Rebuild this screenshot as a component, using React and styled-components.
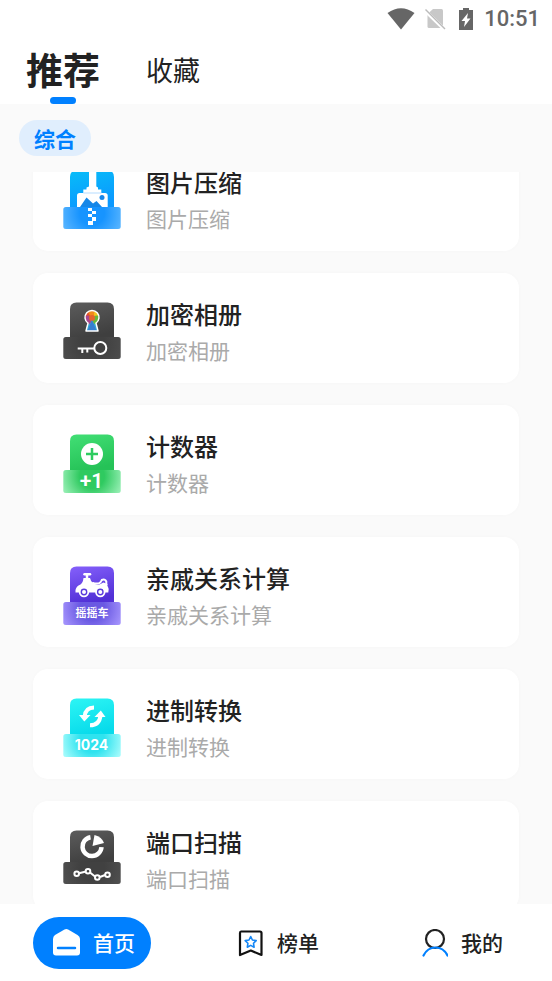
import React, { useLayoutEffect, useRef, useState } from "react";
import styled, { createGlobalStyle } from "styled-components";

const GlobalStyle = createGlobalStyle`
  * {
    box-sizing: border-box;
  }

  body {
    margin: 0;
    background: #fafafa;
    color: #222;
    font-family: "Noto Sans CJK SC", "Noto Sans", sans-serif;
  }

  button {
    border: 0;
    padding: 0;
    background: none;
    color: inherit;
    font: inherit;
    cursor: pointer;
  }
`;

const Page = styled.div`
  display: flex;
  flex-direction: column;
  height: 100vh;
`;

const Header = styled.header`
  background: #fff;
`;

const StatusBar = styled.div`
  display: flex;
  align-items: center;
  justify-content: flex-end;
  height: 37px;
  padding-right: 12px;
  color: #666;
`;

const Clock = styled.time`
  margin-left: 10px;
  font-family: Roboto, sans-serif;
  font-size: 22px;
  font-weight: 500;
`;

const StatusIcon = styled.svg`
  display: block;
  height: 24px;
  margin-right: ${(props) => props.$gap || 0}px;
`;

const Tabs = styled.nav`
  display: flex;
  gap: 46px;
  height: 67px;
  padding-left: 26px;
`;

const Tab = styled.button`
  display: flex;
  flex-direction: column;
  align-items: center;
  justify-content: space-between;
  height: 67px;
  font-size: ${(props) => (props.$active ? 37 : 27)}px;
  font-weight: ${(props) => (props.$active ? 700 : 400)};
  line-height: ${(props) => (props.$active ? 64 : 66)}px;

  &::after {
    content: "";
    width: 26px;
    height: 7px;
    border-radius: 4px;
    background: ${(props) => (props.$active ? "#0080ff" : "transparent")};
  }
`;

const TabLabel = styled.span`
  height: 60px;
`;

const Categories = styled.div`
  display: flex;
  padding: 16px 19px;
`;

const Category = styled.button`
  && {
    height: 36px;
    padding: 0 15px;
    border-radius: 18px;
    background: #e0eefd;
    color: #0080ff;
    font-size: 21px;
    font-weight: 700;
    line-height: 34px;
  }
`;

const ToolList = styled.ul`
  flex: 1;
  min-height: 0;
  margin: 0;
  padding: 0 33px 22px;
  overflow-y: auto;
  list-style: none;
  scrollbar-width: none;
`;

const ToolCard = styled.li`
  display: flex;
  gap: 25px;
  height: 110px;
  margin-bottom: 22px;
  padding: 22px 30px 14px;
  border-radius: 15px;
  background: #fff;
  box-shadow: 0 0 4px rgba(0, 0, 0, 0.02);
`;

const ToolIcon = styled.svg`
  flex: none;
  width: 58px;
  height: 60px;
  margin-top: 7px;
`;

const ToolName = styled.h2`
  margin: 0;
  font-size: 24px;
  font-weight: 500;
  line-height: 37px;
`;

const ToolText = styled.p`
  margin: 0;
  color: #aaa;
  font-size: 21px;
  font-weight: 400;
  line-height: 37px;
`;

const BottomNav = styled.nav`
  display: flex;
  justify-content: space-between;
  padding: 13px 33px 12px;
  background: #fff;
`;

const NavItem = styled.button`
  && {
    display: flex;
    align-items: center;
    gap: 13px;
    width: 118px;
    height: 52px;
    padding-left: 19px;
    border-radius: 26px;
    background: ${(props) => (props.$active ? "#0080ff" : "transparent")};
    color: ${(props) => (props.$active ? "#fff" : "#222")};
    font-size: 21px;
    font-weight: 500;
    white-space: nowrap;
  }
`;

const NavLabel = styled.span`
  padding-bottom: 3px;
`;

const NavIcon = styled.svg`
  flex: none;
  width: 28px;
  height: 28px;
`;

// Every tool icon is a tall block standing behind a wider plate
function BlockIcon({ id, top, plate, split = 36, end = 59, children }) {
  return (
    <ToolIcon viewBox="0 0 58 60" aria-hidden="true">
      <defs>
        <linearGradient id={`${id}-top`} x1="0" y1="0" x2="0.3" y2="1">
          <stop offset="0" stopColor={top[0]} />
          <stop offset="1" stopColor={top[1]} />
        </linearGradient>
        <radialGradient
          id={`${id}-plate`}
          gradientUnits="userSpaceOnUse"
          cx="29"
          cy={split + 6}
          r="31"
        >
          <stop offset="0" stopColor={plate[0]} />
          <stop offset="0.4" stopColor={plate[0]} />
          <stop offset="1" stopColor={plate[1]} />
        </radialGradient>
      </defs>
      <path
        d={`M7 ${split + 2}V7Q7 .5 13.500 .5H44.500Q51 .5 51 7V${split + 2}Z`}
        fill={`url(#${id}-top)`}
      />
      <rect
        x="0.300"
        y={split}
        width="57.400"
        height={end - split}
        rx="2.500"
        fill={`url(#${id}-plate)`}
      />
      {children}
    </ToolIcon>
  );
}

function CompressIcon() {
  return (
    <BlockIcon id="zip" top={["#08bdf8", "#0a98ff"]} plate={["#1794ff", "#55b3ff"]} split={37}>
      <path d="M26 0h7.300v16.500l1.700 1v2h3.300V23H20.300v-3.500h3.200v-2l2.500-1z" fill="#fff" />
      <path d="M14 37V25.500q0-2.500 2.500-2.500h25.500q2.700 0 2.700 2.500V37z" fill="#fff" />
      <path d="M20.300 23h18" stroke="#b5dcff" strokeWidth="1" />
      <path d="M17 37l6.500-9.500 6.500 6 3.500-2.500 5.500 6z" fill="#1687e8" />
      <circle cx="39" cy="27.500" r="2.500" fill="#1687e8" />
      <path
        d="M25 38h4v3h-4zM29 41h4v3h-4zM25 44h4v3h-4zM29 47h4v4h-4zM25 51h5v4h-5z"
        fill="#fff"
      />
    </BlockIcon>
  );
}

function AlbumIcon() {
  return (
    <BlockIcon id="album" top={["#5c5c5c", "#3f3f3f"]} plate={["#414141", "#4c4c4c"]} split={35} end={57}>
      <clipPath id="bulb">
        <path d="M25 21.200a7 7 0 1 1 8 0L35 29H23z" />
      </clipPath>
      <g clipPath="url(#bulb)">
        <rect x="20" y="6" width="18" height="25" fill="#35a9d4" />
        <circle cx="24" cy="11" r="5.500" fill="#e3502b" />
        <circle cx="30" cy="10" r="4.500" fill="#f08a1d" />
        <circle cx="35" cy="12" r="4" fill="#f4c51e" />
        <circle cx="34" cy="18" r="4.500" fill="#67b83b" />
        <circle cx="24" cy="18" r="4.500" fill="#a8478f" />
        <circle cx="29" cy="16" r="3" fill="#e4672e" />
        <path d="M29 18l-5 12h10z" fill="#367ed0" />
      </g>
      <path
        d="M25 21.200a7 7 0 1 1 8 0L35 29H23z"
        fill="none"
        stroke="#fff"
        strokeWidth="1.500"
        strokeLinejoin="round"
      />
      <g fill="none" stroke="#fff" strokeWidth="2">
        <circle cx="37.300" cy="46" r="6" />
        <path d="M31 46.500H14.700M19.300 46.500v4.500M24.300 46.500v4" />
      </g>
    </BlockIcon>
  );
}

function CounterIcon() {
  return (
    <BlockIcon id="count" top={["#42df75", "#25c257"]} plate={["#2fca60", "#92edb0"]}>
      <circle cx="29" cy="20" r="11" fill="#fff" />
      <path d="M29 14v12M23 20h12" stroke="#2dcc60" strokeWidth="2.500" />
      <text
        x="28.500"
        y="54"
        textAnchor="middle"
        fill="#fff"
        fontFamily="Roboto, sans-serif"
        fontSize="21"
        fontWeight="600"
      >
        +1
      </text>
    </BlockIcon>
  );
}

function RelativeIcon() {
  return (
    <BlockIcon id="car" top={["#8560fb", "#5130d6"]} plate={["#6a59e2", "#a291fb"]}>
      <path d="M21.500 8.300h5.500" stroke="#fff" strokeWidth="2.500" strokeLinecap="round" />
      <path d="M24 9v6" stroke="#fff" strokeWidth="2.500" />
      <path
        d="M12.500 26q-.5-4 3-6.500 4.500-1.500 5-7.500h6.500q.8 4 3.500 5.500 3 1.500 6 1l4-2 4 1.500q-.5 2 .5 3 1.500 2 .3 5.500H12.500z"
        fill="#fff"
      />
      <path
        d="M30 17q3 1 6 .2 1.800-.7 2.800-3.200 3-1.500 4.500 1.500v3"
        fill="none"
        stroke="#fff"
        strokeWidth="2"
        strokeLinecap="round"
      />
      <g fill="#5a3bdd" stroke="#fff" strokeWidth="1.800">
        <circle cx="21" cy="26" r="4.300" />
        <circle cx="37.300" cy="26" r="4.300" />
      </g>
      <circle cx="21" cy="26" r="2" fill="#fff" />
      <circle cx="37.300" cy="26" r="2" fill="#fff" />
      <text x="29" y="51" textAnchor="middle" fill="#fff" fontSize="11" fontWeight="700">
        摇摇车
      </text>
    </BlockIcon>
  );
}

function ConvertIcon() {
  return (
    <BlockIcon id="convert" top={["#2df5f4", "#08dbeb"]} plate={["#2fe3ef", "#a0fafb"]}>
      <g fill="none" stroke="#fff" strokeWidth="4">
        <path d="M31 9.500q-8.500 0-9.300 9" />
        <path d="M27 27.300q9.500 0 10.500-9.800" />
      </g>
      <path d="M16 17h11.500L21.300 23.500z" fill="#fff" />
      <path d="M31.500 19L37.800 12.500l4.700 6.500z" fill="#fff" />
      <text
        x="28.500"
        y="52"
        textAnchor="middle"
        fill="#fff"
        fontFamily="Inter, sans-serif"
        fontSize="14"
        fontWeight="700"
      >
        1024
      </text>
    </BlockIcon>
  );
}

function PortIcon() {
  return (
    <BlockIcon id="port" top={["#5c5c5c", "#3f3f3f"]} plate={["#414141", "#4f4f4f"]} split={32} end={54}>
      <path d="M27.500 7.200a9.500 9.500 0 1 0 11 10" fill="none" stroke="#fff" strokeWidth="4.500" />
      <path d="M31.500 5Q39 7 41 13L29.500 16z" fill="#fff" />
      <path d="M16 43.200l7-1.700M27 42.500l5 4M37 47l5-2" stroke="#fff" strokeWidth="2" />
      <g fill="none" stroke="#fff" strokeWidth="2">
        <circle cx="13.700" cy="43.800" r="2.300" />
        <circle cx="25" cy="41.200" r="2.300" />
        <circle cx="34.300" cy="47.500" r="2.300" />
        <circle cx="44.500" cy="44.800" r="2.300" />
      </g>
    </BlockIcon>
  );
}

function HomeIcon() {
  return (
    <NavIcon viewBox="0 0 28 28" aria-hidden="true">
      <path
        d="M3 6L12.500 .5q1.800-1 3.600 0L25.500 6q2.500 1.500 2.500 4v13.500q0 3-3 3H4q-3 0-3-3V10q0-2.500 2-4z"
        fill="#fff"
      />
      <path d="M6 19h17" stroke="#0080ff" strokeWidth="2.500" strokeLinecap="round" />
    </NavIcon>
  );
}

function RankIcon() {
  return (
    <NavIcon viewBox="0 0 28 28" fill="none" strokeLinejoin="round" aria-hidden="true">
      <path d="M5 2.500h19q1.500 0 1.500 1.500v22l-10.700-4.500L4 26V4q0-1.500 1-1.500z" stroke="#111" strokeWidth="2.200" />
      <path
        d="M14.700 7.500l1.700 3.500 3.800.6-2.700 2.700.6 3.900-3.400-1.800-3.400 1.800.6-3.900-2.700-2.700 3.800-.6z"
        stroke="#1687f5"
        strokeWidth="1.600"
      />
    </NavIcon>
  );
}

function UserIcon() {
  return (
    <NavIcon viewBox="0 0 28 28" fill="none" strokeWidth="2.200" aria-hidden="true">
      <circle cx="15" cy="10" r="9" stroke="#222" />
      <path d="M3.500 26.500q4-8 12-8t12 8" stroke="#0080ff" strokeLinecap="round" />
    </NavIcon>
  );
}

const tools = [
  { name: "图片压缩", Icon: CompressIcon },
  { name: "加密相册", Icon: AlbumIcon },
  { name: "计数器", Icon: CounterIcon },
  { name: "亲戚关系计算", Icon: RelativeIcon },
  { name: "进制转换", Icon: ConvertIcon },
  { name: "端口扫描", Icon: PortIcon },
];

const pages = [
  { name: "首页", Icon: HomeIcon },
  { name: "榜单", Icon: RankIcon },
  { name: "我的", Icon: UserIcon },
];

function Status() {
  return (
    <StatusBar>
      <StatusIcon $gap={10} width="28" viewBox="0 0 28 24" aria-hidden="true">
        <path d="M.5 6Q14-3.500 27.500 6L14 22.500z" fill="#666" />
      </StatusIcon>
      <StatusIcon $gap={12} width="21" viewBox="0 0 21 24" aria-hidden="true">
        <path d="M8 2h8.500q1.500 0 1.500 1.500V21H4q-1.500 0-1.500-1.500V7z" fill="#c8c8c8" />
        <path d="M0 3.500L19.500 22.500" stroke="#fff" strokeWidth="3.500" />
        <path d="M.5 2.500L20 22" stroke="#bbb" strokeWidth="1.500" />
      </StatusIcon>
      <StatusIcon width="16" viewBox="0 0 16 24" aria-hidden="true">
        <path d="M5 1h6v2h4v20H1V3h4z" fill="#666" />
        <path d="M10 6L3.500 14H7l-1 6 6.500-8.500H9z" fill="#fff" />
      </StatusIcon>
      <Clock>10:51</Clock>
    </StatusBar>
  );
}

function App() {
  const [tab, setTab] = useState("推荐");
  const [page, setPage] = useState("首页");
  const list = useRef(null);

  useLayoutEffect(() => {
    list.current.scrollTop = 31;
  }, []);

  return (
    <Page>
      <GlobalStyle />
      <Header>
        <Status />
        <Tabs>
          {["推荐", "收藏"].map((name) => (
            <Tab key={name} $active={tab === name} onClick={() => setTab(name)}>
              <TabLabel>{name}</TabLabel>
            </Tab>
          ))}
        </Tabs>
      </Header>
      <Categories>
        <Category>综合</Category>
      </Categories>
      <ToolList ref={list}>
        {tools.map(({ name, Icon }) => (
          <ToolCard key={name}>
            <Icon />
            <div>
              <ToolName>{name}</ToolName>
              <ToolText>{name}</ToolText>
            </div>
          </ToolCard>
        ))}
      </ToolList>
      <BottomNav>
        {pages.map(({ name, Icon }) => (
          <NavItem key={name} $active={page === name} onClick={() => setPage(name)}>
            <Icon />
            <NavLabel>{name}</NavLabel>
          </NavItem>
        ))}
      </BottomNav>
    </Page>
  );
}

export default App;
